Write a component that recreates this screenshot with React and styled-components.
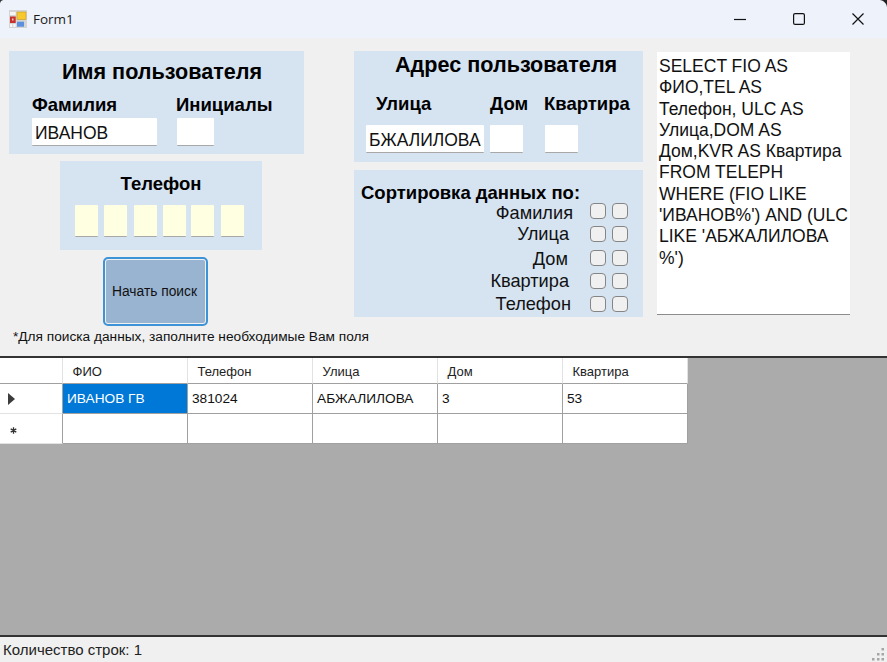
import React from "react";
import styled, { createGlobalStyle } from "styled-components";

const Global = createGlobalStyle`
  html, body {
    margin: 0;
    padding: 0;
    background: #f0f0f0;
  }
  * {
    box-sizing: border-box;
  }
`;

const Window = styled.div`
  position: relative;
  width: 887px;
  height: 662px;
  display: flex;
  flex-direction: column;
  overflow: hidden;
  background: #f0f0f0;
  color: #000;
  font-family: "Liberation Sans", Arial, sans-serif;
`;

const CornerRight = styled.div`
  position: absolute;
  top: 0;
  right: 0;
  width: 8px;
  height: 8px;
  background: radial-gradient(circle at bottom left, transparent 7.5px, #222 8.5px);
`;

const CornerLeft = styled.div`
  position: absolute;
  top: 0;
  left: 0;
  width: 4px;
  height: 4px;
  background: radial-gradient(circle at bottom right, transparent 3.5px, #333 4.5px);
`;

const TitleBar = styled.div`
  height: 38px;
  flex: none;
  display: flex;
  align-items: center;
  padding-left: 9px;
  background: #eef2fb;
`;

const Caption = styled.span`
  margin-left: 6px;
  font-family: "Open Sans", sans-serif;
  font-size: 13.5px;
  color: #1a1a1a;
`;

const WinButtons = styled.div`
  margin-left: auto;
  display: flex;
`;

const WinButton = styled.div`
  width: 59px;
  height: 38px;
  display: flex;
  align-items: center;
  justify-content: center;
`;

const FormArea = styled.div`
  height: 318px;
  flex: none;
  display: grid;
  grid-template-columns: 345px 303px 193px;
  padding: 13px 0 0 9px;
`;

const LeftColumn = styled.div`
  display: flex;
  flex-direction: column;
  align-items: flex-start;
`;

const MiddleColumn = styled.div`
  display: flex;
  flex-direction: column;
  gap: 8px;
`;

const Panel = styled.div`
  background: #d6e4f2;
`;

const NamePanel = styled(Panel)`
  width: 295px;
  height: 103px;
  padding: 9px 0 0 23px;
`;

const PhonePanel = styled(Panel)`
  width: 202px;
  height: 89px;
  margin: 7px 0 0 51px;
  padding-top: 13px;
  text-align: center;
`;

const AddressPanel = styled(Panel)`
  width: 289px;
  height: 111px;
  padding-top: 2px;
`;

const SortPanel = styled(Panel)`
  width: 289px;
  height: 147px;
  padding: 13px 0 0 7px;
`;

const Heading = styled.div`
  font-size: 21.6px;
  line-height: 24px;
  font-weight: 700;
  white-space: nowrap;
  padding-left: ${(p) => p.$indent}px;
`;

const SubHeading = styled.div`
  font-size: 18.5px;
  line-height: 20px;
  font-weight: 700;
  white-space: nowrap;
`;

const FieldRow = styled.div`
  display: grid;
  grid-template-columns: ${(p) => p.$columns};
  margin-top: ${(p) => p.$top}px;
  padding-left: ${(p) => p.$indent || 0}px;
`;

const Input = styled.div`
  height: 28px;
  width: ${(p) => p.$width}px;
  background: ${(p) => p.$bg || "#fff"};
  border-bottom: 1px solid #a8a8a8;
  border-radius: 1px;
  padding: 4px 0 0 3px;
  font-size: 17.5px;
  line-height: 23px;
  white-space: nowrap;
  overflow: hidden;
  color: #111;
`;

const PhoneRow = styled.div`
  display: grid;
  grid-template-columns: 29px 30px 29px 28px 30px 23px;
  margin-top: 11px;
  padding-left: 15px;
`;

const PhoneCell = styled(Input)`
  height: 32px;
`;

const SearchButton = styled.button`
  width: 105px;
  height: 69px;
  margin: 7px 0 0 94px;
  padding: 0 2px 0 0;
  background: #99b4d1;
  border: 2px solid #3d93d8;
  outline: 1px solid #f0f0f0;
  outline-offset: -3px;
  border-radius: 5px;
  font-family: "Liberation Sans", Arial, sans-serif;
  font-size: 13.8px;
  color: #111;
`;

const Note = styled.div`
  margin: 2px 0 0 4px;
  font-size: 13.7px;
  line-height: 18px;
  white-space: nowrap;
  color: #111;
`;

const SortList = styled.div`
  display: flex;
  flex-direction: column;
  margin-top: -3.5px;
  padding-right: 15px;
`;

const SortRow = styled.div`
  height: 23.25px;
  display: flex;
  align-items: center;
  justify-content: flex-end;
  gap: 6px;
  font-size: 18.2px;
  color: #111;
`;

const SortLabel = styled.span`
  margin-right: ${(p) => p.$gap}px;
  margin-top: ${(p) => p.$down}px;
  line-height: 18px;
`;

const CheckBox = styled.span`
  width: 16px;
  height: 16px;
  border: 1.5px solid #858585;
  border-radius: 4px;
  background: #f0f0f0;
`;

const QueryBox = styled.div`
  width: 193px;
  height: 263px;
  margin-top: 1px;
  padding: 4px 0 0 2px;
  background: #fff;
  border-bottom: 1px solid #8c8c8c;
  font-size: 17.5px;
  line-height: 21.3px;
  white-space: nowrap;
  color: #111;
`;

const GridArea = styled.div`
  flex: 1;
  background: #ababab;
  border-top: 2px solid #333;
  border-bottom: 2px solid #333;
`;

const Table = styled.div`
  display: grid;
  grid-template-columns: 63px repeat(5, 125px);
  grid-template-rows: 26px 30px 30px;
  width: 688px;
  background: #fff;
  font-size: 13.7px;
`;

const HeaderCell = styled.div`
  display: flex;
  align-items: center;
  padding-left: 9.5px;
  padding-top: 2px;
  background: #fff;
  color: #222;
  font-size: 13px;
  border-right: 1px solid #e2e2e2;
  border-bottom: 1px solid #a0a0a0;
`;

const RowHeader = styled.div`
  display: flex;
  align-items: center;
  padding-left: 8px;
  background: #fff;
  border-right: 1px solid #a0a0a0;
  border-bottom: 1px solid #e2e2e2;
`;

const Cell = styled.div`
  display: flex;
  align-items: center;
  padding-left: 4px;
  background: ${(p) => (p.$selected ? "#0078d7" : "#fff")};
  color: ${(p) => (p.$selected ? "#fff" : "#111")};
  border-right: 1px solid #a0a0a0;
  border-bottom: 1px solid #a0a0a0;
`;

const Arrow = styled.span`
  width: 0;
  height: 0;
  border-left: 7px solid #3c3c3c;
  border-top: 6px solid transparent;
  border-bottom: 6px solid transparent;
`;

const NewRowMark = styled.svg`
  margin: 3px 0 0 2px;
`;

const StatusBar = styled.div`
  height: 25px;
  flex: none;
  display: flex;
  align-items: center;
  justify-content: space-between;
  padding: 0 1px 0 3px;
  font-size: 15px;
  color: #222;
`;

const GripIcon = styled.svg`
  align-self: flex-end;
`;

const AppIcon = () => (
  <svg width="18" height="18" viewBox="0 0 18 18">
    <rect width="18" height="18" fill="#d4d4d4" />
    <rect x="8" y="2" width="9" height="7.5" fill="#f7c92f" stroke="#c79a1a" strokeWidth="0.6" />
    <rect x="1" y="2" width="5.7" height="3" fill="#f6f6f6" />
    <rect x="1" y="6.5" width="5.7" height="6.5" fill="#c8302c" />
    <rect x="3" y="8.5" width="1.5" height="2" fill="#f2d0c8" />
    <rect x="8" y="11.7" width="7" height="5" fill="#5b8fe0" />
    <rect x="1" y="14" width="2.3" height="3" fill="#f6f6f6" />
    <rect x="4.3" y="14" width="2.4" height="3" fill="#f6f6f6" />
  </svg>
);

const Grip = () => (
  <GripIcon width="15" height="15" viewBox="0 0 15 15" fill="#a6a6a6">
    <rect x="10.5" y="1" width="2.5" height="2.5" />
    <rect x="6" y="6" width="2.5" height="2.5" />
    <rect x="10.5" y="6" width="2.5" height="2.5" />
    <rect x="1" y="11" width="2.5" height="2.5" />
    <rect x="6" y="11" width="2.5" height="2.5" />
    <rect x="10.5" y="11" width="2.5" height="2.5" />
  </GripIcon>
);

const columns = ["ФИО", "Телефон", "Улица", "Дом", "Квартира"];
const row = ["ИВАНОВ ГВ", "381024", "АБЖАЛИЛОВА", "3", "53"];
const sortFields = [
  ["Фамилия", 11, 3],
  ["Улица", 15, 0],
  ["Дом", 16, 2],
  ["Квартира", 15, 0],
  ["Телефон", 13, 0],
];
const queryLines = [
  "SELECT FIO AS",
  "ФИО,TEL AS",
  "Телефон, ULC AS",
  "Улица,DOM AS",
  "Дом,KVR AS Квартира",
  "FROM TELEPH",
  "WHERE (FIO LIKE",
  "'ИВАНОВ%') AND (ULC",
  "LIKE 'АБЖАЛИЛОВА",
  "%')",
];

export default function App() {
  return (
    <Window>
      <Global />
      <CornerLeft />
      <CornerRight />
      <TitleBar>
        <AppIcon />
        <Caption>Form1</Caption>
        <WinButtons>
          <WinButton>
            <svg width="12" height="12" viewBox="0 0 12 12">
              <path d="M0 6.5h12" stroke="#111" strokeWidth="1.2" />
            </svg>
          </WinButton>
          <WinButton>
            <svg width="12" height="12" viewBox="0 0 12 12">
              <rect x="0.6" y="0.6" width="10.8" height="10.8" rx="1.5" fill="none" stroke="#111" strokeWidth="1.2" />
            </svg>
          </WinButton>
          <WinButton>
            <svg width="12" height="12" viewBox="0 0 12 12">
              <path d="M0.5 0.5l11 11M11.5 0.5l-11 11" stroke="#111" strokeWidth="1.2" />
            </svg>
          </WinButton>
        </WinButtons>
      </TitleBar>

      <FormArea>
        <LeftColumn>
          <NamePanel>
            <Heading $indent={30}>Имя пользователя</Heading>
            <FieldRow $columns="144px 100px" $top={11}>
              <SubHeading>Фамилия</SubHeading>
              <SubHeading>Инициалы</SubHeading>
            </FieldRow>
            <FieldRow $columns="145px 40px" $top={3}>
              <Input $width={125}>ИВАНОВ</Input>
              <Input $width={37} />
            </FieldRow>
          </NamePanel>
          <PhonePanel>
            <SubHeading>Телефон</SubHeading>
            <PhoneRow>
              {[0, 1, 2, 3, 4, 5].map((i) => (
                <PhoneCell key={i} $width={23} $bg="#ffffe1" />
              ))}
            </PhoneRow>
          </PhonePanel>
          <SearchButton>Начать поиск</SearchButton>
          <Note>*Для поиска данных, заполните необходимые Вам поля</Note>
        </LeftColumn>

        <MiddleColumn>
          <AddressPanel>
            <Heading $indent={41}>Адрес пользователя</Heading>
            <FieldRow $columns="114px 54px 100px" $indent={22} $top={17}>
              <SubHeading>Улица</SubHeading>
              <SubHeading>Дом</SubHeading>
              <SubHeading>Квартира</SubHeading>
            </FieldRow>
            <FieldRow $columns="124px 55px 40px" $indent={12} $top={11}>
              <Input $width={118}>БЖАЛИЛОВА</Input>
              <Input $width={33} />
              <Input $width={33} />
            </FieldRow>
          </AddressPanel>
          <SortPanel>
            <SubHeading>Сортировка данных по:</SubHeading>
            <SortList>
              {sortFields.map(([label, gap, down]) => (
                <SortRow key={label}>
                  <SortLabel $gap={gap} $down={down}>{label}</SortLabel>
                  <CheckBox />
                  <CheckBox />
                </SortRow>
              ))}
            </SortList>
          </SortPanel>
        </MiddleColumn>

        <QueryBox>
          {queryLines.map((line) => (
            <div key={line}>{line}</div>
          ))}
        </QueryBox>
      </FormArea>

      <GridArea>
        <Table>
          <HeaderCell />
          {columns.map((c) => (
            <HeaderCell key={c}>{c}</HeaderCell>
          ))}
          <RowHeader>
            <Arrow />
          </RowHeader>
          {row.map((v, i) => (
            <Cell key={v} $selected={i === 0}>
              {v}
            </Cell>
          ))}
          <RowHeader>
            <NewRowMark width="7" height="7" viewBox="0 0 7 7">
              <path d="M3.5 0.3v6.4M0.7 1.9l5.6 3.2M6.3 1.9l-5.6 3.2" stroke="#333" strokeWidth="1.3" />
            </NewRowMark>
          </RowHeader>
          {columns.map((c) => (
            <Cell key={c} />
          ))}
        </Table>
      </GridArea>

      <StatusBar>
        <span>Количество строк: 1</span>
        <Grip />
      </StatusBar>
    </Window>
  );
}
